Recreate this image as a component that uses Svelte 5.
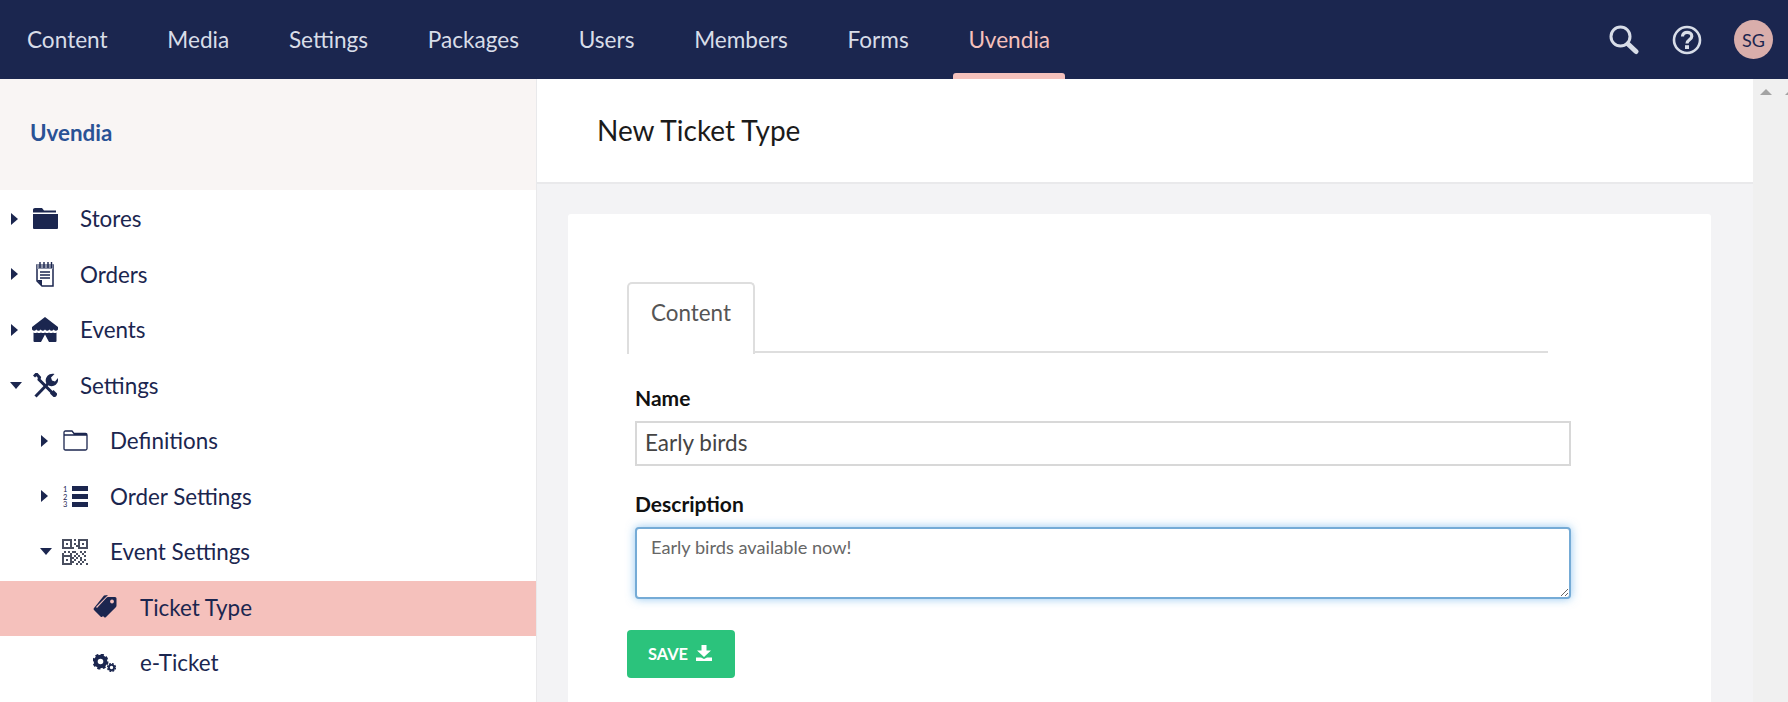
<script>
  const sections = ['Content', 'Media', 'Settings', 'Packages', 'Users', 'Members', 'Forms', 'Uvendia']

  const tree = [
    { name: 'Stores', icon: 'folder', level: 0, caret: 'closed' },
    { name: 'Orders', icon: 'notepad', level: 0, caret: 'closed' },
    { name: 'Events', icon: 'tent', level: 0, caret: 'closed' },
    { name: 'Settings', icon: 'tools', level: 0, caret: 'open' },
    { name: 'Definitions', icon: 'folder-line', level: 1, caret: 'closed' },
    { name: 'Order Settings', icon: 'list', level: 1, caret: 'closed' },
    { name: 'Event Settings', icon: 'qr', level: 1, caret: 'open' },
    { name: 'Ticket Type', icon: 'tags', level: 2, active: true },
    { name: 'e-Ticket', icon: 'cogs', level: 2 }
  ]

  // modules of the little qr icon, 0 to 12 on each axis
  const qrBits = [
    [6,0],[8,1],[6,2],[7,3],[5,4],[8,4],[1,6],[3,6],[5,6],[6,6],[9,6],[11,6],
    [0,7],[4,7],[7,7],[10,7],[2,8],[6,8],[8,8],[11,8],[5,9],[7,9],[9,9],
    [6,10],[9,10],[11,10],[5,11],[8,11],[10,11],[7,12],[9,12],[12,12]
  ]
</script>

<div class="page">
  <header class="topbar">
    <nav class="sections">
      {#each sections as s, i}
        <a href="#{s}" class="section" class:current={i === sections.length - 1}>{s}</a>
      {/each}
    </nav>
    <div class="tools">
      <svg class="tool search" viewBox="0 0 30 30" fill="none" stroke="currentColor">
        <circle cx="11.5" cy="11.5" r="9.5" stroke-width="3"/>
        <path d="M19 19 L27 26.5" stroke-width="5" stroke-linecap="round"/>
      </svg>
      <svg class="tool help" viewBox="0 0 30 30" fill="none" stroke="currentColor">
        <circle cx="15" cy="15" r="13" stroke-width="2.6"/>
        <path d="M10.5 11.5 C10.5 5.8 19.8 6 19.8 11.3 C19.8 14.8 15 14.8 15 18.4" stroke-width="3.2"/>
        <rect x="13" y="20.2" width="4" height="3.8" fill="currentColor" stroke="none"/>
      </svg>
      <div class="avatar">SG</div>
    </div>
  </header>

  <div class="body">
    <aside class="sidebar">
      <div class="sidebar-head">Uvendia</div>
      <ul class="tree">
        {#each tree as item}
          <li class="row level{item.level}" class:active={item.active}>
            <span class="caret {item.caret || 'none'}"></span>
            <span class="icon">
              {#if item.icon === 'folder'}
                <svg width="25" height="21" viewBox="0 0 25 21"><path d="M2 0h7l2 2.5h12v2H0V1.5Q0 0 2 0ZM0 6h25v14q0 1-1 1H1q-1 0-1-1Z" fill="#1b264f"/></svg>
              {:else if item.icon === 'notepad'}
                <svg width="18" height="25" viewBox="0 0 18 25"><path d="M1 3h16v21H6l-5-5Z" fill="#fff" stroke="#1b264f" stroke-width="1.5"/><path d="M1 2h16v5H1Z" fill="#8d93a8"/><path d="M4 0v6M8 0v6M12 0v6M15.500 0v6" stroke="#1b264f" stroke-width="1.4"/><path d="M4 10h10M4 13h10M4 16h10" stroke="#1b264f" stroke-width="1.5"/><path d="M1 18h5v6Z" fill="#1b264f"/></svg>
              {:else if item.icon === 'tent'}
                <svg width="26" height="25" viewBox="0 0 26 25" fill="#1b264f"><path d="M13 0 26 10v2.500q-2.200 2.500-4.300 0-2.200 2.500-4.300 0-2.200 2.500-4.400 0-2.200 2.500-4.300 0-2.200 2.500-4.400 0Q2.200 15 0 12.500V10Z"/><path d="M1.500 15.500q2 1.200 3.500 0 2 1.200 4 0 2 1.200 4 0 2 1.200 4 0 2 1.200 4 0 1.700 1.200 3.500 0V24q0 1-1 1h-6.500L13 17.500 9 25H2.500q-1 0-1-1Z"/></svg>
              {:else if item.icon === 'tools'}
                <svg width="25" height="25" viewBox="0 0 25 25" fill="none" stroke="#1b264f"><path d="M2.500 23.500 16 9.500" stroke-width="3"/><path d="M13 9.500c-1.500-4.500 2.500-10 8.500-8.500l-3.500 3.500 1 3 3 1 3-3.500c1 5.500-4 10-9.500 7.500Z" fill="#1b264f" stroke="none"/><path d="M1 3.500 3.500 1 6.500 4.500 6 6.500 20 20.500" stroke-width="3"/><path d="M17 20.500 20.500 17 24 20.500a3 3 0 0 1-3.500 3.500Z" fill="#1b264f" stroke="none"/></svg>
              {:else if item.icon === 'folder-line'}
                <svg width="25" height="21" viewBox="0 0 25 21"><path d="M1 4V2.500Q1 1 2.500 1h6.500l2 2.500h11.500Q24 3.500 24 5v13.500q0 1.500-1.500 1.500h-20Q1 20 1 18.500ZM1 5h23" fill="none" stroke="#1b264f" stroke-width="1.300"/></svg>
              {:else if item.icon === 'list'}
                <svg class="numbered" width="25" height="21" viewBox="0 0 25 21"><text x="0" y="6" class="num">1</text><text x="0" y="13.500" class="num">2</text><text x="0" y="21" class="num">3</text><rect x="9" y="0" width="16" height="5" fill="#1b264f"/><rect x="9" y="8" width="16" height="5" fill="#1b264f"/><rect x="9" y="16" width="16" height="5" fill="#1b264f"/></svg>
              {:else if item.icon === 'qr'}
                <svg width="26" height="26" viewBox="0 0 13 13" fill="#4a4f60"><path fill-rule="evenodd" d="M0 0h5v5H0ZM1 1v3h3V1ZM8 0h5v5H8ZM9 1v3h3V1ZM0 8h5v5H0ZM1 9v3h3V9Z"/><rect x="2" y="2" width="1" height="1"/><rect x="10" y="2" width="1" height="1"/><rect x="2" y="10" width="1" height="1"/>{#each qrBits as b}<rect x={b[0]} y={b[1]} width="1" height="1"/>{/each}</svg>
              {:else if item.icon === 'tags'}
                <svg width="24" height="26" viewBox="0 0 24 26"><path d="M11 1.500 15 1 3 13l8 8-1.500 1.500q-1 1-2 0L1 16q-1-1 0-2Z" fill="#1b264f"/><path d="M15 3h7q1.500 0 1.500 1.500v7q0 1-.7 1.700L13 23q-1 1-2 0l-7-7q-1-1 0-2l9.500-10.300Q14 3 15 3Z" fill="#1b264f"/><circle cx="19" cy="7.500" r="1.900" fill="#f5c1bc"/></svg>
              {:else if item.icon === 'cogs'}
                <svg width="24" height="18" viewBox="0 0 24 18" fill="none" stroke="#1b264f"><circle cx="7.500" cy="7.500" r="4.800" stroke-width="4"/><circle cx="7.500" cy="7.500" r="6.600" stroke-width="2.800" stroke-dasharray="3 2.180"/><circle cx="18.500" cy="13.500" r="2.600" stroke-width="1.800"/><circle cx="18.500" cy="13.500" r="3.800" stroke-width="1.600" stroke-dasharray="1.900 1.080"/></svg>
              {/if}
            </span>
            <span class="label">{item.name}</span>
          </li>
        {/each}
      </ul>
    </aside>

    <main class="main">
      <div class="main-head">New Ticket Type</div>
      <div class="main-content">
        <section class="card">
          <div class="tabs">
            <div class="tab">Content</div>
          </div>
          <div class="fields">
            <label class="field">
              <span class="field-label">Name</span>
              <input class="text-input" type="text" value="Early birds" />
            </label>
            <label class="field second">
              <span class="field-label">Description</span>
              <textarea class="text-area">Early birds available now!</textarea>
            </label>
          </div>
          <button class="save" type="button">
            SAVE
            <svg width="16" height="16" viewBox="0 0 16 16" fill="#fff"><path d="M5.500 0h5v5.500H15L8 12 1 5.500h4.500Z"/><path d="M0 12.500h5L8 14l3-1.500h5V16H0Z"/></svg>
          </button>
        </section>
      </div>
    </main>

    <div class="scrollbars">
      <span class="arrow"></span>
      <span class="arrow"></span>
    </div>
  </div>
</div>

<style>
  :global(body) {
    margin: 0;
    font-family: Lato, "Open Sans", sans-serif;
    overflow: hidden;
  }

  .page {
    display: flex;
    flex-direction: column;
    height: 702px;
    overflow: hidden;
  }

  .topbar {
    display: flex;
    justify-content: space-between;
    align-items: center;
    height: 79px;
    flex: none;
    background: #1b264f;
  }

  .sections {
    display: flex;
    align-self: stretch;
    padding-left: 12px;
  }

  .section {
    position: relative;
    display: flex;
    align-items: center;
    padding: 0 15px;
    margin-right: 29.700px;
    font-size: 22.600px;
    color: #d8dde8;
    text-decoration: none;
  }

  .section.current {
    color: #f5c1bc;
  }

  .section.current::after {
    content: '';
    position: absolute;
    left: 0;
    right: 0;
    bottom: 0;
    height: 6px;
    background: #f5c1bc;
    border-radius: 3px 3px 0 0;
  }

  .tools {
    display: flex;
    align-items: center;
    padding-right: 15px;
    color: #d8dde8;
  }

  .tool {
    width: 30px;
    height: 30px;
  }

  .search {
    margin-right: 33px;
  }

  .help {
    margin-right: 32px;
  }

  .avatar {
    display: flex;
    align-items: center;
    justify-content: center;
    width: 39px;
    height: 39px;
    border-radius: 50%;
    background: #d9aeab;
    color: #1b264f;
    font-size: 18px;
  }

  .body {
    display: flex;
    flex: 1;
    min-height: 0;
  }

  .sidebar {
    width: 536px;
    flex: none;
    border-right: 1px solid #e9e9eb;
    background: #fff;
  }

  .sidebar-head {
    display: flex;
    align-items: center;
    height: 111px;
    padding-left: 30px;
    padding-bottom: 5px;
    box-sizing: border-box;
    background: #f9f5f4;
    color: #2a5295;
    font-size: 22.400px;
    font-weight: 700;
  }

  .tree {
    list-style: none;
    margin: 0;
    padding: 2px 0 0;
  }

  .row {
    display: flex;
    align-items: center;
    height: 55.500px;
    box-sizing: border-box;
    padding-bottom: 2px;
    color: #1b264f;
    font-size: 22.400px;
  }

  .row.level0 { padding-left: 11px; }
  .row.level1 { padding-left: 41px; }
  .row.level2 { padding-left: 71px; }

  .row.active {
    background: #f5c1bc;
  }

  .caret {
    width: 21px;
    flex: none;
  }

  .caret.closed::before {
    content: '';
    display: block;
    width: 0;
    height: 0;
    border-style: solid;
    border-width: 6px 0 6px 7px;
    border-color: transparent transparent transparent #1b264f;
  }

  .caret.open::before {
    content: '';
    display: block;
    width: 0;
    height: 0;
    margin-left: -1px;
    border-style: solid;
    border-width: 7px 6px 0;
    border-color: #1b264f transparent transparent;
  }

  .icon {
    display: flex;
    align-items: center;
    justify-content: center;
    width: 26px;
    margin-right: 22px;
    flex: none;
  }

  .numbered {
    overflow: visible;
  }

  .num {
    font-size: 7.500px;
    fill: #1b264f;
  }

  .main {
    display: flex;
    flex-direction: column;
    flex: 1;
    min-width: 0;
    background: #f3f3f5;
  }

  .main-head {
    display: flex;
    align-items: center;
    height: 105px;
    flex: none;
    box-sizing: border-box;
    padding-left: 60px;
    padding-bottom: 2px;
    background: #fff;
    border-bottom: 2px solid #e9e9eb;
    color: #1b1b1b;
    font-size: 28px;
  }

  .main-content {
    padding: 30px 42px 0 31px;
  }

  .card {
    height: 500px;
    padding: 68px 140px 0 60px;
    background: #fff;
    border-radius: 3px;
  }

  .tabs {
    height: 69px;
    margin-left: -1px;
    margin-right: 23px;
    border-bottom: 2px solid #dedede;
  }

  .tab {
    width: 128px;
    height: 72px;
    box-sizing: border-box;
    padding-top: 15px;
    text-align: center;
    background: #fff;
    border: 2px solid #dedede;
    border-bottom: none;
    border-radius: 5px 5px 0 0;
    color: #555;
    font-size: 22.400px;
  }

  .fields {
    padding: 31px 0 0 7px;
  }

  .field {
    display: block;
  }

  .field.second {
    margin-top: 24px;
  }

  .field-label {
    display: block;
    margin-bottom: 10px;
    color: #111;
    font-size: 21px;
    font-weight: 700;
    line-height: 27px;
  }

  .text-input {
    display: block;
    width: 100%;
    height: 45px;
    box-sizing: border-box;
    padding: 0 8px 2px;
    border: 2px solid #d8d8d8;
    border-radius: 0;
    outline: none;
    background: #fff;
    color: #444;
    font-family: inherit;
    font-size: 22.500px;
  }

  .text-area {
    display: block;
    width: 100%;
    height: 72px;
    box-sizing: border-box;
    padding: 8px 14px;
    border: 2px solid #75abd6;
    border-radius: 4px;
    outline: none;
    background: #fff;
    box-shadow: 0 0 10px rgba(102, 175, 233, .7);
    color: #666;
    font-family: inherit;
    font-size: 18.200px;
    line-height: 20px;
  }

  .save {
    display: flex;
    align-items: center;
    gap: 8px;
    width: 108px;
    height: 48px;
    margin-top: 31px;
    margin-left: -1px;
    padding: 0 0 2px 21px;
    border: none;
    border-radius: 4px;
    background: #2bc37c;
    color: #fff;
    font-family: inherit;
    font-size: 16.400px;
    font-weight: 700;
  }

  .scrollbars {
    display: flex;
    gap: 13px;
    width: 35px;
    flex: none;
    padding: 10px 0 0 7px;
    box-sizing: border-box;
    overflow: hidden;
    background: #f0f0f0;
  }

  .arrow {
    flex: none;
    width: 0;
    height: 0;
    border-style: solid;
    border-width: 0 6px 6px;
    border-color: transparent transparent #a3a3a3;
  }
</style>
